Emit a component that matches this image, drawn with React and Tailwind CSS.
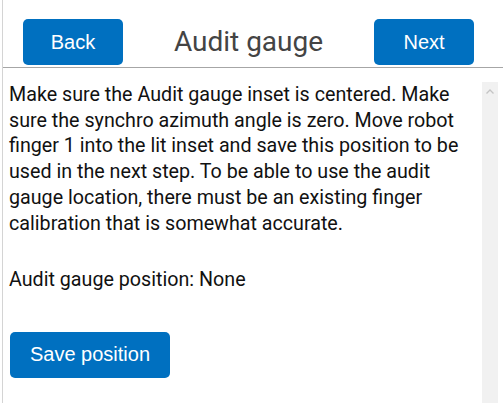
import React from 'react'

const blueBtn =
  'bg-[#0070c0] text-white rounded-[5px] text-[20px] font-["Liberation_Sans",Arial,sans-serif] flex items-center justify-center'

const App = () => {
  return (
    <div className="h-[403px] w-[503px] bg-white overflow-hidden">
      <div className="ml-[2px] h-full border-l border-[#d4d4d4] flex flex-col">
        {/* Header */}
        <div className="h-[68px] shrink-0 border-b border-[#a6a6a6] flex items-start justify-between pl-[20px] pr-[29px] pt-[19px]">
          <button className={`${blueBtn} w-[100px] h-[46px]`}>Back</button>
          <h1 className="text-[28px] leading-[46px] text-[#444] font-['Roboto',sans-serif]">
            Audit gauge
          </h1>
          <button className={`${blueBtn} w-[100px] h-[46px]`}>Next</button>
        </div>

        {/* Body */}
        <div className="mt-[14px] mr-[5px] flex-1 flex min-h-0">
          <div className="flex-1 pl-[6px] pr-[4px] font-['Roboto',sans-serif] text-[19.7px] leading-[25.7px] text-[#111]">
            <p>
              Make sure the Audit gauge inset is centered. Make sure the synchro azimuth
              angle is zero. Move robot finger 1 into the lit inset and save this position
              to be used in the next step. To be able to use the audit gauge location, there
              must be an existing finger calibration that is somewhat accurate.
            </p>
            <p className="mt-[31px]">Audit gauge position: None</p>
            <button className={`${blueBtn} mt-[39px] ml-[1px] w-[160px] h-[46px]`}>
              Save position
            </button>
          </div>

          {/* scrollbar track */}
          <div className="w-[16px] shrink-0 bg-[#f1f1f1] flex justify-center pt-[7px]">
            <svg width="8" height="5" viewBox="0 0 8 5">
              <path d="M0.5 4.5 L4 1 L7.5 4.5" fill="none" stroke="#c4c4c4" strokeWidth="1.3" />
            </svg>
          </div>
        </div>
      </div>
    </div>
  )
}

export default App
